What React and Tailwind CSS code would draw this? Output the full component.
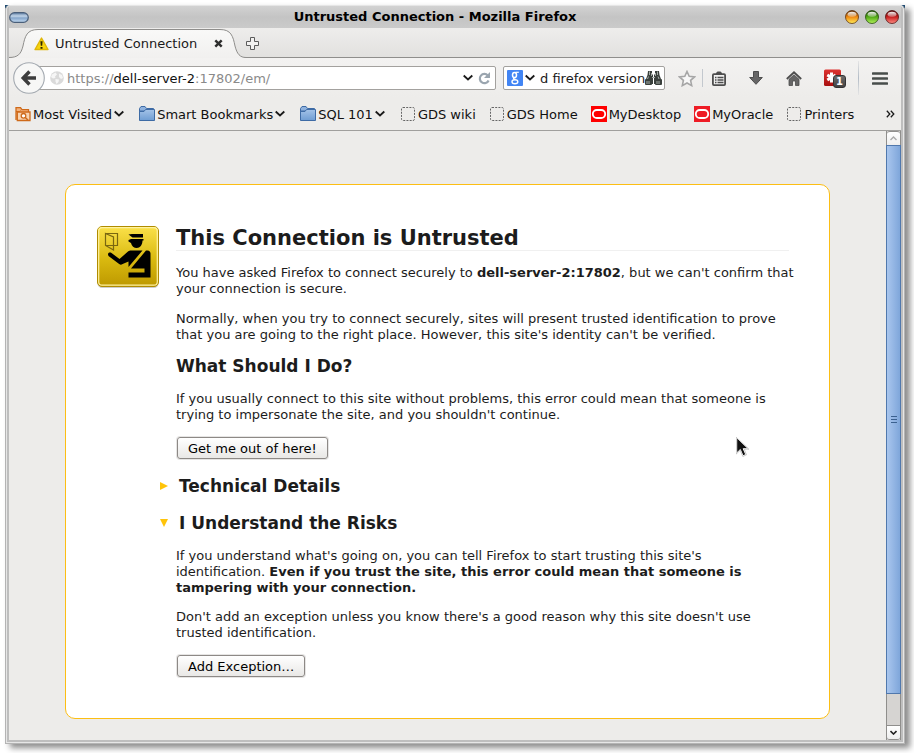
import React from "react";

function Chevron({ className = "" }) {
  return (
    <svg className={`shrink-0 ${className}`} width="10" height="8" viewBox="0 0 10 8" aria-hidden="true">
      <path d="M.7 1.500 5 5.500 9.300 1.500" fill="none" stroke="#1a1a1a" strokeWidth="1.800" />
    </svg>
  );
}

function Orb({ label, dark, mid, light }) {
  const id = `orb-${label}`;
  return (
    <button type="button" aria-label={label} className="block size-[14px]">
      <svg width="14" height="14" viewBox="0 0 14 14">
        <defs>
          <linearGradient id={id} x1="0" y1="0" x2="0" y2="1">
            <stop offset="0" stopColor={dark} />
            <stop offset=".5" stopColor={mid} />
            <stop offset="1" stopColor={light} />
          </linearGradient>
          <linearGradient id={`${id}-shine`} x1="0" y1="0" x2="0" y2="1">
            <stop offset="0" stopColor="#fff" stopOpacity=".95" />
            <stop offset="1" stopColor="#fff" stopOpacity=".25" />
          </linearGradient>
        </defs>
        <circle cx="7" cy="7" r="6.500" fill={`url(#${id})`} stroke={dark} strokeOpacity=".75" />
        <ellipse cx="7" cy="4.300" rx="4.400" ry="2.600" fill={`url(#${id}-shine)`} />
      </svg>
    </button>
  );
}

function TitleBar() {
  return (
    <header className="flex h-[22px] shrink-0 items-center bg-linear-to-b from-[#d2d2d2] via-[#c4c4c4] to-[#cacaca] pr-[2px]">
      <button type="button" aria-label="Window menu" className="block h-[11px] w-5">
        <svg width="20" height="11" viewBox="0 0 20 11">
          <defs>
            <linearGradient id="pill" x1="0" y1="0" x2="0" y2="1">
              <stop offset="0" stopColor="#5a7ba3" />
              <stop offset=".35" stopColor="#c3d5e8" />
              <stop offset=".55" stopColor="#86a6cb" />
              <stop offset="1" stopColor="#c5dcf4" />
            </linearGradient>
          </defs>
          <rect x=".7" y=".7" width="18.6" height="9.6" rx="4.8" fill="url(#pill)" stroke="#4a5f7a" strokeWidth="1.2" />
        </svg>
      </button>
      <h1 className="flex-1 pr-1 text-center text-[13px] leading-4 font-bold text-black">
        Untrusted Connection - Mozilla Firefox
      </h1>
      <div className="flex gap-[6px]">
        <Orb label="Minimize" dark="#5a2c05" mid="#f08a12" light="#ffee5c" />
        <Orb label="Maximize" dark="#1c4406" mid="#52ab17" light="#b4f25c" />
        <Orb label="Close" dark="#4d0808" mid="#c92020" light="#ff8f86" />
      </div>
    </header>
  );
}

function TabStrip() {
  return (
    <div role="tablist" className="flex h-[30px] shrink-0 items-end border-b border-[#8f8e8c] bg-linear-to-b from-[#eeedec] to-[#e2e1df]">
      <div role="tab" aria-selected="true" className="relative -mb-px flex h-[30px] w-[237px] items-center pt-px pl-[25px]">
        <svg className="absolute inset-0" width="237" height="30" viewBox="0 0 237 30" aria-hidden="true">
          <defs>
            <linearGradient id="tab" x1="0" y1="0" x2="0" y2="1">
              <stop offset="0" stopColor="#f9f9f8" />
              <stop offset="1" stopColor="#f1f0ef" />
            </linearGradient>
          </defs>
          <path
            d="M0 30V29.5C9 29.5 12 26 14 18 16 8 18 1.500 29 1.500H211C222 1.500 224 8 226 18 228 26 231 29.500 237 29.500V30Z"
            fill="url(#tab)"
          />
          <path
            d="M0 29.500C9 29.500 12 26 14 18 16 8 18 1.500 29 1.500H211C222 1.500 224 8 226 18 228 26 231 29.500 237 29.500"
            fill="none"
            stroke="#8f8e8c"
          />
        </svg>
        <svg className="relative shrink-0" width="15" height="14" viewBox="0 0 15 14" aria-hidden="true">
          <path d="M7.500 1 14 12.500H1Z" fill="#f6d40f" stroke="#dfb60a" strokeWidth="1.400" strokeLinejoin="round" />
          <path d="M6.400 4.200H8.600L8.200 8.800H6.800ZM6.500 10H8.500V11.700H6.500Z" fill="#2c2500" />
        </svg>
        <span className="relative flex-1 pl-[6px] text-[13px] leading-4 text-[#1a1a1a]">Untrusted Connection</span>
        <button type="button" aria-label="Close tab" className="relative mr-[23px] block size-[9px]">
          <svg width="9" height="9" viewBox="0 0 9 9">
            <path d="M1.300 1.300 7.700 7.700M7.700 1.300 1.300 7.700" stroke="#2e2e2e" strokeWidth="2.400" />
          </svg>
        </button>
      </div>
      <button type="button" aria-label="New tab" className="mb-[7px] block size-[13px]">
        <svg width="13" height="13" viewBox="0 0 13 13">
          <path d="M4.500.5H8.500V4.500H12.500V8.500H8.500V12.500H4.500V8.500H.5V4.500H4.500Z" fill="#f3f2f1" stroke="#5c5c5c" />
        </svg>
      </button>
    </div>
  );
}

function AddressBar() {
  return (
    <div className="flex min-w-0 flex-1 items-center">
      <button type="button" aria-label="Back" className="z-10 -mr-4 block size-8 shrink-0">
        <svg width="32" height="32" viewBox="0 0 32 32">
          <circle cx="16" cy="16" r="15.300" fill="#f7f7f6" stroke="#a3a9b0" strokeWidth="1.100" />
          <path d="M16.500 9.500 10.200 16 16.500 22.500M11 16H23" fill="none" stroke="#3d3d3d" strokeWidth="3.400" />
        </svg>
      </button>
      <div className="flex h-6 min-w-0 flex-1 items-center rounded-[2px] border border-[#a3a19e] bg-white pr-1 pl-5">
        <svg className="shrink-0" width="14" height="14" viewBox="0 0 14 14" aria-hidden="true">
          <circle cx="7" cy="7" r="6.800" fill="#dadada" />
          <path d="M2 3.500 5.500 1.500 7 3.500 5 5.500 5.500 7 3 7.500 1 6ZM5.500 8 9 8.500 8.500 11 6.500 13 5.500 10.500ZM9 2.500 12 4 13 7 11 8 9 6Z" fill="#f6f6f6" />
        </svg>
        <div role="textbox" aria-label="Address" tabIndex={0} className="flex-1 truncate pt-[2px] pl-[3px] text-[13px] leading-5 text-[#8a8a8a]">
          https://<span className="text-[#111]">dell-server-2</span>:17802/em/
        </div>
        <button type="button" aria-label="Show history" className="mr-[5px]">
          <Chevron className="block" />
        </button>
        <button type="button" aria-label="Reload">
          <svg className="block" width="13" height="13" viewBox="0 0 13 13">
            <path d="M9.800 3.400A4.600 4.600 0 1 0 10.600 8.500" fill="none" stroke="#9aa5af" strokeWidth="2.200" />
            <path d="M12 0V6H6Z" fill="#9aa5af" />
          </svg>
        </button>
      </div>
    </div>
  );
}

function SearchBox() {
  return (
    <form className="ml-[7px] flex h-6 w-[162px] shrink-0 items-center rounded-[2px] border border-[#a3a19e] bg-white pr-[2px] pl-[3px]" onSubmit={(e) => e.preventDefault()}>
      <button type="button" aria-label="Search engine" className="flex items-center gap-[2px]">
        <svg width="16" height="16" viewBox="0 0 16 16">
          <rect width="16" height="16" rx="1" fill="#4285f4" />
          <g fill="none" stroke="#fff">
            <ellipse cx="7.500" cy="5" rx="2" ry="2.600" strokeWidth="1.500" />
            <path d="M8.500 2.300H11.800" strokeWidth="1.200" />
            <path d="M7 7.500C6 8.500 6.800 9.100 8.300 9.500" strokeWidth="1.300" />
            <ellipse cx="7.900" cy="11.700" rx="2.900" ry="2" strokeWidth="1.400" />
          </g>
        </svg>
        <Chevron />
      </button>
      <input aria-label="Search" defaultValue="d firefox version" className="w-[105px] min-w-0 flex-1 pt-[2px] pl-[5px] text-[13px] leading-5 text-[#1a1a1a] outline-none" />
      <button type="submit" aria-label="Find">
        <svg className="block" width="17" height="16" viewBox="0 0 17 16">
          <g fill="#3a403c">
            <path d="M3 1H7V4L8 5V14H1V9L2.500 5ZM14 1H10V4L9 5V14H16V9L14.500 5Z" />
            <rect x="0" y="9" width="7" height="6" rx="1" />
            <rect x="10" y="9" width="7" height="6" rx="1" />
          </g>
          <path d="M4.500 1.500V5M3.500 6.500 2.500 9M12.500 1.500V5M13 6.500 14 9M7 7.500H10M2 11V14M4 11V14M12 11V14M14 11V14M6.500 3V6M10.500 3V6" stroke="#a3aaa5" />
        </svg>
      </button>
    </form>
  );
}

function ToolIcon({ label, className, children }) {
  return (
    <button type="button" aria-label={label} className={`flex shrink-0 items-center justify-center ${className}`}>
      {children}
    </button>
  );
}

function NavBar() {
  return (
    <nav aria-label="Navigation" className="flex h-10 shrink-0 items-center bg-linear-to-b from-[#f3f2f1] to-[#edecea] pl-1">
      <AddressBar />
      <SearchBox />
      <ToolIcon label="Bookmark this page" className="ml-3 w-5">
        <svg width="18" height="17" viewBox="0 0 18 17">
          <path d="M9 1.500 11.200 6.300 16.500 6.900 12.600 10.400 13.700 15.600 9 13 4.300 15.600 5.400 10.400 1.500 6.900 6.800 6.300Z" fill="#f7f7f7" stroke="#a6a6a6" strokeWidth="1.600" />
        </svg>
      </ToolIcon>
      <span className="mr-1 ml-[5px] h-[18px] w-px bg-[#c3c8ce]" />
      <ToolIcon label="Show bookmarks" className="w-6">
        <svg width="14" height="15" viewBox="0 0 14 15">
          <path d="M4 3.500V2L5.500.5H8.500L10 2V3.500" fill="#4d4d4d" />
          <rect x=".9" y="3.200" width="12.200" height="10.900" rx="1" fill="#f1f1f0" stroke="#4d4d4d" strokeWidth="1.800" />
          <path d="M3 6.500H4.500M3 9H4.500M3 11.500H4.500M5.500 6.500H11.500M5.500 9H11.500M5.500 11.500H11.500" stroke="#4d4d4d" strokeWidth="1.300" />
        </svg>
      </ToolIcon>
      <ToolIcon label="Downloads" className="ml-[13px] w-6">
        <svg width="14" height="14" viewBox="0 0 14 14">
          <path d="M4.500.5H9.500V6.500H13.300L7 13.300.7 6.500H4.500Z" fill="#666" stroke="#4d4d4d" strokeLinejoin="round" />
        </svg>
      </ToolIcon>
      <ToolIcon label="Home" className="ml-[14px] w-6">
        <svg width="16" height="15" viewBox="0 0 16 15">
          <path d="M.8 8 8 1.300 15.200 8" fill="none" stroke="#4d4d4d" strokeWidth="1.800" />
          <path d="M3 8.300 8 3.800 13 8.300V14.500H9.500V10H6.500V14.500H3Z" fill="#666" stroke="#4d4d4d" strokeWidth=".8" />
        </svg>
      </ToolIcon>
      <ToolIcon label="Add-on notifications" className="relative ml-[18px] w-[22px]">
        <svg width="22" height="18" viewBox="0 0 22 18">
          <defs>
            <linearGradient id="addon" x1="0" y1="0" x2="0" y2="1">
              <stop offset="0" stopColor="#dd3330" />
              <stop offset="1" stopColor="#a80f0f" />
            </linearGradient>
          </defs>
          <rect y=".5" width="17" height="16.500" rx="1.500" fill="url(#addon)" />
          <path d="M7.500 3.500V13.500M3.300 6 11.700 11M11.700 6 3.300 11" stroke="#fff" strokeWidth="3" />
        </svg>
        <span className="absolute right-0 -bottom-px size-[13px] rounded-[3px] border border-[#333] bg-linear-to-b from-[#6a6a6a] to-[#444] text-center text-[10px] leading-[11px] font-bold text-white">1</span>
      </ToolIcon>
      <span className="ml-3 h-[34px] w-px bg-linear-to-b from-[#e5e5e5] via-[#b3bcc6] to-[#e5e5e5]" />
      <ToolIcon label="Open menu" className="mr-[13px] ml-[13px] w-4">
        <svg width="16" height="13" viewBox="0 0 16 13">
          <path d="M1 1.500H15M1 6.500H15M1 11.500H15" stroke="#484d4b" strokeWidth="2.600" strokeLinecap="round" />
        </svg>
      </ToolIcon>
    </nav>
  );
}

function FolderIcon() {
  return (
    <svg className="shrink-0" width="16" height="16" viewBox="0 0 16 16" aria-hidden="true">
      <defs>
        <linearGradient id="folder" x1="0" y1="0" x2="0" y2="1">
          <stop offset="0" stopColor="#a4c3e8" />
          <stop offset="1" stopColor="#6f9dd3" />
        </linearGradient>
      </defs>
      <path d="M.5 14V2.500L2 .5H6L7.500 2.500H14.500V5H.5Z" fill="#8fb2de" stroke="#3e6ba5" />
      <path d="M.5 14.500V5.500H5L6.500 3.500H15.500V14.500Z" fill="url(#folder)" stroke="#3e6ba5" />
    </svg>
  );
}

function VisitedIcon() {
  return (
    <svg className="shrink-0" width="16" height="16" viewBox="0 0 16 16" aria-hidden="true">
      <path d="M1 14V1.700H5.500L7 3.700H13.500V6" fill="#f3b27c" stroke="#cf6a1a" strokeWidth="1.300" />
      <path d="M1 5.500H4.500L5.500 4.500" fill="none" stroke="#cf6a1a" />
      <path d="M2.300 14.500V6H15V14.500Z" fill="#f8d3b0" stroke="#cf6a1a" strokeWidth="1.300" />
      <circle cx="8.500" cy="9.800" r="2.300" fill="#fff" stroke="#cf6a1a" strokeWidth="1.300" />
      <path d="M10.200 11.500 13 14" stroke="#cf6a1a" strokeWidth="1.600" />
    </svg>
  );
}

function BlankIcon() {
  return (
    <svg className="shrink-0" width="16" height="16" viewBox="0 0 16 16" aria-hidden="true">
      <rect x="1.500" y="1.500" width="13" height="13" rx="1.500" fill="none" stroke="#666" strokeDasharray="2 1.200" />
    </svg>
  );
}

function OracleIcon({ soft }) {
  return (
    <svg className="shrink-0" width="16" height="16" viewBox="0 0 16 16" aria-hidden="true">
      <rect width="16" height="16" fill={soft ? "#ee1c25" : "#f00"} />
      <rect x="1.800" y="4" width="12.400" height="8" rx="4" fill="none" stroke="#fff" strokeWidth="1.800" />
    </svg>
  );
}

const bookmarks = [
  { label: "Most Visited", icon: <VisitedIcon />, menu: true },
  { label: "Smart Bookmarks", icon: <FolderIcon />, menu: true },
  { label: "SQL 101", icon: <FolderIcon />, menu: true },
  { label: "GDS wiki", icon: <BlankIcon /> },
  { label: "GDS Home", icon: <BlankIcon /> },
  { label: "MyDesktop", icon: <OracleIcon /> },
  { label: "MyOracle", icon: <OracleIcon soft /> },
  { label: "Printers", icon: <BlankIcon /> },
];

function BookmarksBar() {
  return (
    <nav aria-label="Bookmarks" className="flex h-[33px] shrink-0 items-center gap-[13px] border-b border-[#a09f9d] bg-[#edecea] pr-[6px] pl-[6px] text-[13px] leading-4 whitespace-nowrap text-[#111]">
      {bookmarks.map((b) =>
        b.menu ? (
          <button key={b.label} type="button" className="flex items-center gap-[2px] pr-[2px]">
            {b.icon}
            <span className="pt-[2px]">{b.label}</span>
            <Chevron />
          </button>
        ) : (
          <a key={b.label} href="#" className="flex items-center gap-[2px]">
            {b.icon}
            <span className="pt-[2px]">{b.label}</span>
          </a>
        ),
      )}
      <button type="button" aria-label="More bookmarks" className="ml-auto">
        <svg className="block" width="9" height="8" viewBox="0 0 9 8">
          <path d="M.8.8 3.800 4 .8 7.200M4.800.8 7.800 4 4.800 7.200" fill="none" stroke="#1a1a1a" strokeWidth="1.300" />
        </svg>
      </button>
    </nav>
  );
}

function OfficerIcon() {
  return (
    <svg className="shrink-0" width="64" height="64" viewBox="0 0 64 64" role="img" aria-label="Passport officer">
      <defs>
        <linearGradient id="badge" x1="0" y1="0" x2="0" y2="1">
          <stop offset="0" stopColor="#fbe14a" />
          <stop offset=".55" stopColor="#d9b90f" />
          <stop offset="1" stopColor="#bd9800" />
        </linearGradient>
      </defs>
      <rect x="1.500" y="3" width="61" height="60" rx="4.500" fill="#000" opacity=".2" />
      <rect x="1.500" y="1.500" width="61" height="60" rx="4.500" fill="url(#badge)" stroke="#b08c00" />
      <rect x="2.700" y="2.700" width="58.600" height="57.500" rx="3.500" fill="none" stroke="#fff2a0" strokeWidth="1.200" />
      <path d="M9.500 8.500H21.500V20.500H18M9.500 8.500 17.500 12V25L9.500 20.500ZM9.500 20.500H17.500" fill="none" stroke="#7a6710" strokeWidth="1.200" />
      <path d="M32.500 9.500 36 9H47V12.600H36.500ZM35 14H47.500V15.500H46.500C46.500 20 44 23 40.800 23 38 23 35.500 21 35 18L32.500 16.500V15Z" fill="#000" />
      <path d="M12 29.500C12 27.500 14 27 15.500 28L23.500 34 32 26.500C33 25.500 34 25.500 35 25.500H46.500L32.500 42V36.500L25.500 39.500C24.500 40 23.500 39.500 22.500 38.500L12.500 31Z" fill="#000" />
      <path d="M50 25.500H51.500C53.500 25.500 54.500 27 54.500 28.500V52.500H32.500V47.500H48.500V43.500H35Z" fill="#000" />
    </svg>
  );
}

function PushButton({ children }) {
  return (
    <button
      type="button"
      className="ml-px block rounded-[3px] border border-[#8d8986] bg-linear-to-b from-white to-[#e9e8e6] px-[10px] pt-[2px] text-[13px] leading-[18px] text-black shadow-[0_0_0_1px_#e6e5e4]"
    >
      {children}
    </button>
  );
}

function Disclosure({ open, className, children }) {
  return (
    <h3 className={`-ml-4 ${className}`}>
      <button type="button" aria-expanded={open} className="flex items-center text-[17px] leading-5 font-bold">
        <svg className="mr-[11px]" width="8" height="8" viewBox="0 0 8 8" aria-hidden="true">
          <path d={open ? "M0 0H8L4 8Z" : "M0 0 8 4 0 8Z"} fill="#ffc40a" />
        </svg>
        {children}
      </button>
    </h3>
  );
}

function ErrorPage() {
  return (
    <main className="min-w-0 flex-1 overflow-hidden bg-[#edecea] px-14 pt-[53px]">
      <section className="relative flex gap-4 rounded-[10px] border border-[#fcbe14] bg-white pt-10 pr-9 pb-[41px] pl-[30px] text-[13px] leading-4 text-[#1c1c1c]">
        <OfficerIcon />
        <div className="min-w-0 flex-1">
          <h2 className="mr-1 border-b border-[#f0f0f0] pt-px text-[21px] leading-6 font-bold">This Connection is Untrusted</h2>
          <p className="mt-[14px] -mr-1">
            You have asked Firefox to connect securely to <b>dell-server-2:17802</b>, but we can't confirm that your connection is secure.
          </p>
          <p className="mt-[14px]">
            Normally, when you try to connect securely, sites will present trusted identification to prove that you are going to the right place. However, this site's identity can't be verified.
          </p>
          <h3 className="mt-[13px] text-[17px] leading-5 font-bold">What Should I Do?</h3>
          <p className="mt-[15px] mb-[14px]">
            If you usually connect to this site without problems, this error could mean that someone is trying to impersonate the site, and you shouldn't continue.
          </p>
          <PushButton>Get me out of here!</PushButton>
          <Disclosure className="mt-[17px]">Technical Details</Disclosure>
          <Disclosure open className="mt-[17px]">I Understand the Risks</Disclosure>
          <p className="mt-[15px]">
            If you understand what's going on, you can tell Firefox to start trusting this site's identification. <b>Even if you trust the site, this error could mean that someone is tampering with your connection.</b>
          </p>
          <p className="mt-[13px] mb-[14px]">
            Don't add an exception unless you know there's a good reason why this site doesn't use trusted identification.
          </p>
          <PushButton>Add Exception…</PushButton>
        </div>
        <svg className="absolute top-[252px] right-[80px]" width="13" height="20" viewBox="0 0 13 20" aria-hidden="true">
          <path d="M.7.700V16L4.300 12.500 7 18.800 9.800 17.500 7.200 11.700H12.200Z" fill="#111" stroke="#fff" strokeWidth="1" />
          <path d="M.3.300V17L4.200 13.200 6.800 19.500 10.500 17.800 8.200 12.200H12.800Z" fill="none" stroke="#999" strokeWidth=".5" />
        </svg>
      </section>
    </main>
  );
}

function ScrollBar() {
  return (
    <div role="scrollbar" aria-label="Page" aria-controls="root" aria-valuenow={0} className="flex w-[15px] shrink-0 flex-col border-x border-[#8f8e8c] bg-[#d6d4d2]">
      <button type="button" aria-label="Scroll up" className="flex h-[14px] items-center justify-center rounded-t-[3px] border-t border-[#8f8e8c] bg-linear-to-b from-white to-[#eee]">
        <svg width="7" height="5" viewBox="0 0 7 5">
          <path d="M.5 4 3.500 1 6.500 4" fill="none" stroke="#aaa" strokeWidth="1.400" />
        </svg>
      </button>
      <div className="-mx-px flex flex-1 flex-col items-center justify-center border border-[#5078ad] bg-linear-to-r from-[#a9c6ee] to-[#7fa6da]">
        <span className="flex h-[7px] w-[6px] flex-col justify-between">
          <span className="h-px bg-[#3b608f]" />
          <span className="h-px bg-[#3b608f]" />
          <span className="h-px bg-[#3b608f]" />
        </span>
      </div>
      <div className="h-[31px]" />
      <button type="button" aria-label="Scroll down" className="flex h-[15px] items-center justify-center rounded-b-[3px] border-y border-[#8f8e8c] bg-linear-to-b from-white to-[#eee]">
        <svg width="7" height="5" viewBox="0 0 7 5">
          <path d="M.5 1 3.500 4 6.500 1" fill="none" stroke="#222" strokeWidth="1.600" />
        </svg>
      </button>
    </div>
  );
}

export default function App() {
  return (
    <div className="h-screen overflow-hidden bg-white pt-[5px] pr-[9px] pb-[9px] pl-[5px] font-['DejaVu_Sans',sans-serif]">
      <div className="h-full bg-linear-to-b from-[#1f4a70] from-[3px] to-[#b4b4b4] to-[4px] shadow-[5px_4px_6px_rgba(0,0,0,0.45)]">
        <div className="flex h-full flex-col rounded-t-[5px] border border-[#b4b4b4] border-t-[#e6e6e6] bg-[#e6e6e6] p-px pt-0">
          <div className="flex min-h-0 flex-1 flex-col rounded-t-[4px] border-x-2 border-b-2 border-[#bebebe] bg-[#c9c9c9]">
            <TitleBar />
            <TabStrip />
            <NavBar />
            <BookmarksBar />
            <div className="flex min-h-0 flex-1">
              <ErrorPage />
              <ScrollBar />
            </div>
          </div>
        </div>
      </div>
    </div>
  );
}
